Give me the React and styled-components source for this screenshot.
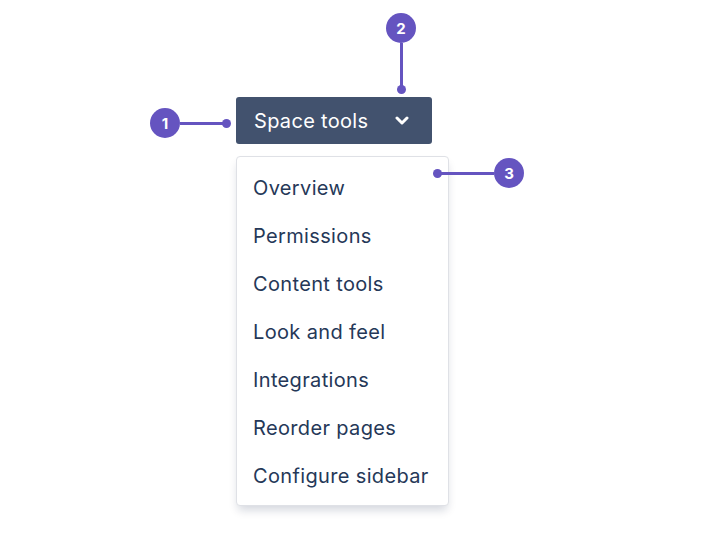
import styled, { createGlobalStyle } from "styled-components";

const GlobalStyle = createGlobalStyle`
    body {
        margin: 0;
        background: #fff;
        font-family: Inter, "Noto Sans", "Liberation Sans", sans-serif;
        -webkit-font-smoothing: antialiased;
    }
`;

const Page = styled.div`
    position: relative;
    width: 706px;
    height: 536px;
    box-sizing: border-box;
    padding: 97px 0 0 236px;
`;

const Widget = styled.div`
    display: inline-flex;
    flex-direction: column;
    align-items: flex-start;
    gap: 12px;
`;

const Trigger = styled.button`
    display: flex;
    align-items: center;
    justify-content: space-between;
    width: 196px;
    height: 47px;
    box-sizing: border-box;
    padding: 0 23px 0 18px;
    border: none;
    border-radius: 3px;
    background-color: #42526e;
    color: #fff;
    font-family: inherit;
    font-size: 20px;
    letter-spacing: 0.3px;
    cursor: pointer;
`;

const Menu = styled.ul`
    list-style: none;
    margin: 0;
    width: 213px;
    box-sizing: border-box;
    padding: 7px 0 5px;
    background: #fff;
    border: 1px solid #dfe1e6;
    border-radius: 4px;
    box-shadow: 0 6px 10px -2px rgba(9, 30, 66, 0.18);
`;

const Item = styled.li`
    height: 48px;
    display: flex;
    align-items: center;
    padding: 0 16px;
    color: #253858;
    font-size: 20px;
    letter-spacing: 0.35px;
`;

const Callout = styled.div`
    position: absolute;
    left: ${(p) => p.x}px;
    top: ${(p) => p.y}px;
    display: flex;
    flex-direction: ${(p) => p.dir};
    align-items: center;
`;

const Badge = styled.span`
    width: 30px;
    height: 30px;
    border-radius: 50%;
    background: #6554c0;
    color: #fff;
    font-size: 15px;
    font-weight: 700;
    display: flex;
    align-items: center;
    justify-content: center;
    flex-shrink: 0;
`;

const Line = styled.span`
    background: #6554c0;
    width: ${(p) => (p.vertical ? 3 : p.len)}px;
    height: ${(p) => (p.vertical ? p.len : 3)}px;
`;

const Dot = styled.span`
    width: 9px;
    height: 9px;
    border-radius: 50%;
    background: #6554c0;
    margin: ${(p) => p.m || "0"};
`;

const items = [
    "Overview",
    "Permissions",
    "Content tools",
    "Look and feel",
    "Integrations",
    "Reorder pages",
    "Configure sidebar",
];

export default function App() {
    return (
        <>
            <GlobalStyle />
            <Page>
                <Widget>
                    <Trigger>
                        Space tools
                        <svg width="14" height="10" viewBox="0 0 14 10">
                            <polyline
                                points="2,2 7,7 12,2"
                                fill="none"
                                stroke="#fff"
                                strokeWidth="3"
                                strokeLinecap="round"
                                strokeLinejoin="round"
                            />
                        </svg>
                    </Trigger>
                    <Menu>
                        {items.map((item) => (
                            <Item key={item}>{item}</Item>
                        ))}
                    </Menu>
                </Widget>

                <Callout x={150} y={108} dir="row">
                    <Badge>1</Badge>
                    <Line len={46} />
                    <Dot m="0 0 0 -4px" />
                </Callout>
                <Callout x={386} y={13} dir="column">
                    <Badge>2</Badge>
                    <Line vertical len={46} />
                    <Dot m="-4px 0 0 0" />
                </Callout>
                <Callout x={433} y={158} dir="row">
                    <Dot m="0 -4px 0 0" />
                    <Line len={56} />
                    <Badge>3</Badge>
                </Callout>
            </Page>
        </>
    );
}
